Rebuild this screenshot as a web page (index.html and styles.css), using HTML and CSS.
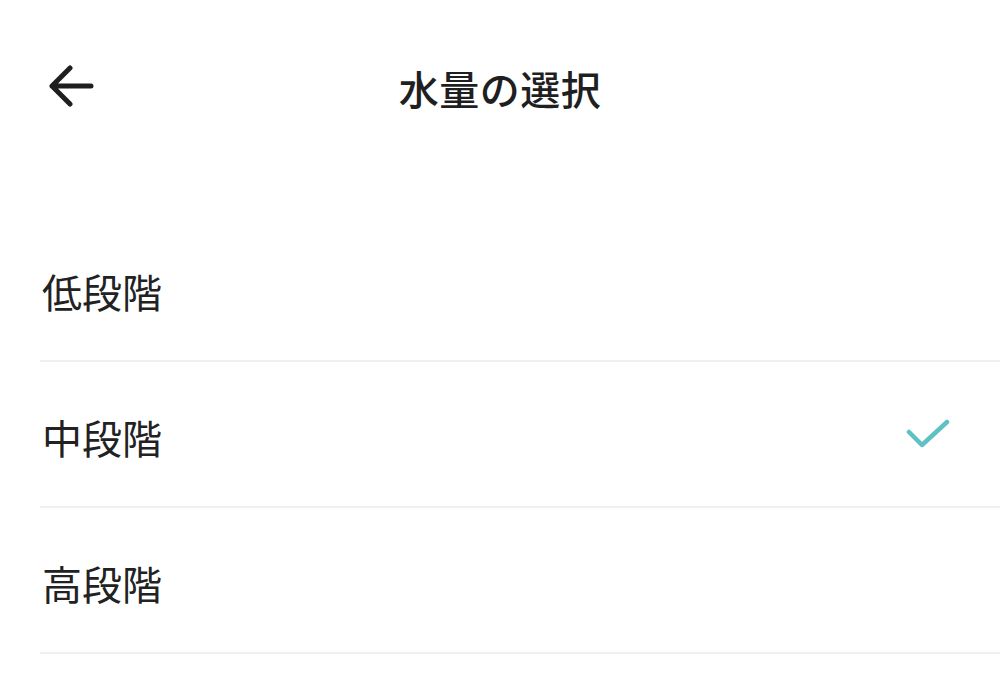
FILE: index.html
```html
<!DOCTYPE html>
<html lang="ja">
<head>
<meta charset="utf-8">
<link rel="stylesheet" href="styles.css">
</head>
<body>
<div class="screen">
  <header class="header">
    <button class="back" aria-label="戻る">
      <svg width="50" height="46" viewBox="0 0 50 46">
        <path d="M44 21 H5 M23 3 L5 21 L23 39" fill="none" stroke="#1f1f1f" stroke-width="5" stroke-linecap="round" stroke-linejoin="round"/>
      </svg>
    </button>
    <h1 class="title">水量の選択</h1>
  </header>
  <ul class="list">
    <li class="item"><span class="label">低段階</span></li>
    <li class="item"><span class="label">中段階</span>
      <svg class="check" width="50" height="36" viewBox="0 0 50 36">
        <path d="M9 13 L22 26 L47 3" fill="none" stroke="#5ec2c4" stroke-width="4.5" stroke-linecap="round" stroke-linejoin="round"/>
      </svg>
    </li>
    <li class="item"><span class="label">高段階</span></li>
  </ul>
</div>
</body>
</html>
```

FILE: styles.css
```css
* { box-sizing: border-box; }
html, body {
  margin: 0;
  padding: 0;
  background: #ffffff;
}
body {
  font-family: "Noto Sans CJK JP", "Noto Sans", sans-serif;
  color: #222222;
  width: 1000px;
  height: 682px;
  overflow: hidden;
}
.screen {
  display: flex;
  flex-direction: column;
}
.header {
  position: relative;
  height: 180px;
  padding-bottom: 5px;
  display: flex;
  align-items: center;
  justify-content: center;
}
.back {
  position: absolute;
  left: 47px;
  top: 65px;
  background: none;
  border: 0;
  padding: 0;
  display: flex;
}
.title {
  margin: 0;
  font-size: 40px;
  font-weight: 500;
  color: #1f1f1f;
  letter-spacing: 0.5px;
}
.list {
  list-style: none;
  margin: 36px 0 0 40px;
  padding: 0;
}
.item {
  height: 146px;
  border-bottom: 2px solid #f0f0f0;
  display: flex;
  align-items: center;
  justify-content: space-between;
  padding: 6px 50px 0 2px;
}
.label {
  font-size: 40px;
  font-weight: 400;
  color: #222222;
}
.check {
  display: block;
}
```
